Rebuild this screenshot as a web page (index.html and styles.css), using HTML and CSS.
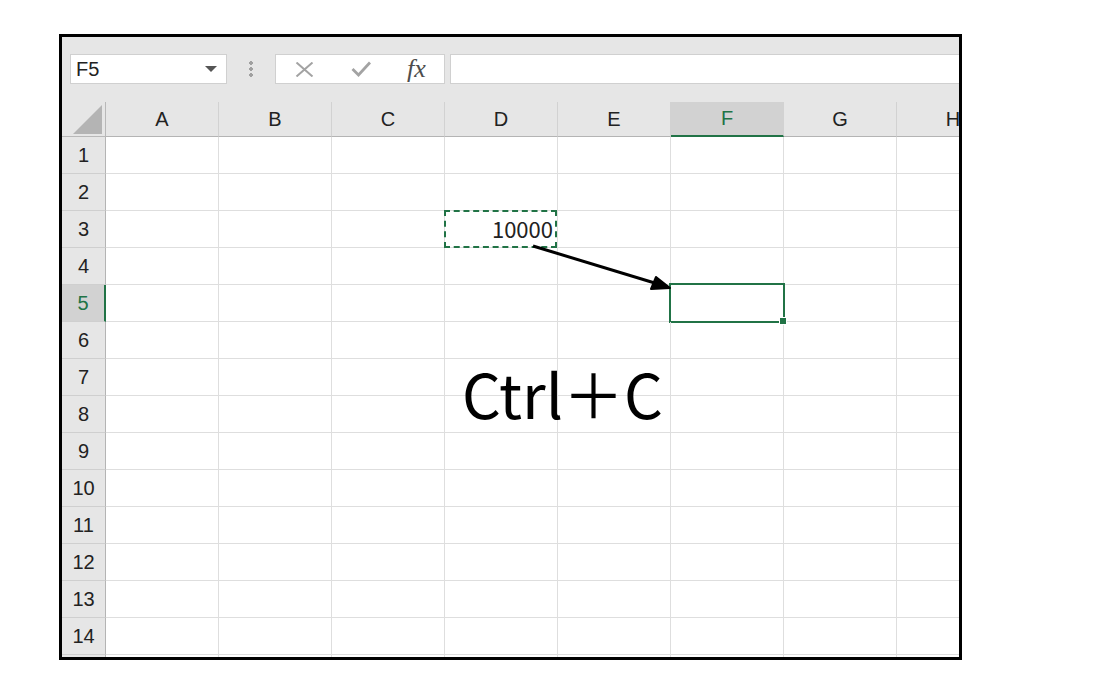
FILE: index.html
```html
<!DOCTYPE html>
<html lang="ja">
<head>
<meta charset="utf-8">
<title>Excel Ctrl+C</title>
<link rel="stylesheet" href="styles.css">
</head>
<body>
<div class="frame">
  <div class="fbar">
    <div class="namebox"><span class="nb-text">F5</span><span class="nb-caret"></span></div>
    <div class="sep"><span class="dots"></span></div>
    <div class="btns">
      <svg class="ic-x" width="19" height="15" viewBox="0 0 19 15"><path d="M1.5 0.5 L17.5 14.5 M17.5 0.5 L1.5 14.5" stroke="#a3a3a3" stroke-width="2" fill="none"/></svg>
      <svg class="ic-ok" width="20" height="16" viewBox="0 0 20 16"><path d="M1.5 8 L7.5 14 L19 1.5" stroke="#a3a3a3" stroke-width="2.8" fill="none"/></svg>
      <span class="fx">fx</span>
    </div>
    <div class="finput"></div>
  </div>
  <div class="sheet">
    <div class="corner"><span class="tri"></span></div>
    <div class="ch">A</div><div class="ch">B</div><div class="ch">C</div><div class="ch">D</div><div class="ch">E</div><div class="ch sel">F</div><div class="ch">G</div><div class="ch">H</div>

    <div class="rh">1</div><div class="c"></div><div class="c"></div><div class="c"></div><div class="c"></div><div class="c"></div><div class="c"></div><div class="c"></div><div class="c"></div>
    <div class="rh">2</div><div class="c"></div><div class="c"></div><div class="c"></div><div class="c"></div><div class="c"></div><div class="c"></div><div class="c"></div><div class="c"></div>
    <div class="rh">3</div><div class="c"></div><div class="c"></div><div class="c"></div><div class="c num copy">10000</div><div class="c"></div><div class="c"></div><div class="c"></div><div class="c"></div>
    <div class="rh">4</div><div class="c"></div><div class="c"></div><div class="c"></div><div class="c"></div><div class="c"></div><div class="c"></div><div class="c"></div><div class="c"></div>
    <div class="rh sel">5</div><div class="c"></div><div class="c"></div><div class="c"></div><div class="c"></div><div class="c"></div><div class="c active"></div><div class="c"></div><div class="c"></div>
    <div class="rh">6</div><div class="c"></div><div class="c"></div><div class="c"></div><div class="c"></div><div class="c"></div><div class="c"></div><div class="c"></div><div class="c"></div>
    <div class="rh">7</div><div class="c"></div><div class="c"></div><div class="c"></div><div class="c"></div><div class="c"></div><div class="c"></div><div class="c"></div><div class="c"></div>
    <div class="rh">8</div><div class="c"></div><div class="c"></div><div class="c"></div><div class="c"></div><div class="c"></div><div class="c"></div><div class="c"></div><div class="c"></div>
    <div class="rh">9</div><div class="c"></div><div class="c"></div><div class="c"></div><div class="c"></div><div class="c"></div><div class="c"></div><div class="c"></div><div class="c"></div>
    <div class="rh">10</div><div class="c"></div><div class="c"></div><div class="c"></div><div class="c"></div><div class="c"></div><div class="c"></div><div class="c"></div><div class="c"></div>
    <div class="rh">11</div><div class="c"></div><div class="c"></div><div class="c"></div><div class="c"></div><div class="c"></div><div class="c"></div><div class="c"></div><div class="c"></div>
    <div class="rh">12</div><div class="c"></div><div class="c"></div><div class="c"></div><div class="c"></div><div class="c"></div><div class="c"></div><div class="c"></div><div class="c"></div>
    <div class="rh">13</div><div class="c"></div><div class="c"></div><div class="c"></div><div class="c"></div><div class="c"></div><div class="c"></div><div class="c"></div><div class="c"></div>
    <div class="rh">14</div><div class="c"></div><div class="c"></div><div class="c"></div><div class="c"></div><div class="c"></div><div class="c"></div><div class="c"></div><div class="c"></div>
    <div class="rh"></div><div class="c"></div><div class="c"></div><div class="c"></div><div class="c"></div><div class="c"></div><div class="c"></div><div class="c"></div><div class="c"></div>

    <svg class="arrow" width="897" height="560" viewBox="0 0 897 560">
      <line x1="471" y1="144" x2="596" y2="182" stroke="#000" stroke-width="3"/>
      <path d="M608 186 L589 187 L594 175 Z" fill="#000" stroke="#000" stroke-width="2" stroke-linejoin="round"/>
    </svg>
    <div class="label">Ctrl＋C</div>
  </div>
</div>
</body>
</html>
```

FILE: styles.css
```css
body {
  margin: 0;
  padding: 34px 0 0 59px;
  background: #fff;
  font-family: "Noto Sans CJK JP", "Liberation Sans", sans-serif;
}

.frame {
  width: 897px;
  height: 620px;
  border: 3px solid #000;
  background: #e6e6e6;
  overflow: hidden;
  display: flex;
  flex-direction: column;
}

.fbar {
  display: flex;
  align-items: center;
  height: 30px;
  margin-top: 17px;
  padding-left: 8px;
  flex: none;
}

.namebox {
  width: 157px;
  height: 30px;
  box-sizing: border-box;
  background: #fff;
  border: 1px solid #d0d0d0;
  display: flex;
  align-items: center;
  justify-content: space-between;
  padding: 0 9px 0 5px;
}

.nb-text {
  font-family: "Liberation Sans", sans-serif;
  font-size: 20px;
  color: #222;
}

.nb-caret {
  width: 0;
  height: 0;
  border-left: 6px solid transparent;
  border-right: 6px solid transparent;
  border-top: 6px solid #555;
}

.sep {
  width: 48px;
  display: flex;
  justify-content: center;
  align-items: center;
  height: 30px;
}

.dots {
  width: 4px;
  height: 18px;
  background: radial-gradient(circle, #a0a0a0 1.6px, transparent 2px) 0 0 / 4px 6px repeat-y;
}

.btns {
  width: 170px;
  height: 30px;
  box-sizing: border-box;
  background: #fff;
  border: 1px solid #d0d0d0;
  display: flex;
  align-items: center;
  padding-left: 19px;
}

.ic-x { margin-right: 37px; }
.ic-ok { margin-right: 36px; }

.fx {
  font-family: "Liberation Serif", serif;
  font-style: italic;
  font-size: 26px;
  line-height: 26px;
  color: #4d4d4d;
  letter-spacing: 0;
}

.finput {
  flex: 1;
  height: 30px;
  margin-left: 5px;
  box-sizing: border-box;
  background: #fff;
  border: 1px solid #d0d0d0;
  border-right: none;
}

.sheet {
  position: relative;
  margin-top: 18px;
  display: grid;
  grid-template-columns: 44px repeat(8, 113px);
  grid-template-rows: 35px repeat(15, 37px);
  background: #fff;
}

.corner {
  background: #e6e6e6;
  border-right: 1px solid #b8b8b8;
  border-bottom: 1px solid #b8b8b8;
  box-sizing: border-box;
  display: flex;
  align-items: flex-end;
  justify-content: flex-end;
  padding: 0 3px 2px 0;
}

.tri {
  width: 0;
  height: 0;
  border-left: 29px solid transparent;
  border-bottom: 29px solid #b4b4b4;
}

.ch {
  background: #e6e6e6;
  border-right: 1px solid #d2d2d2;
  border-bottom: 1px solid #b4b4b4;
  box-sizing: border-box;
  display: flex;
  align-items: center;
  justify-content: center;
  font-family: "Liberation Sans", sans-serif;
  font-size: 20px;
  color: #222;
}

.ch.sel {
  background: #d2d2d2;
  border-bottom: 2px solid #217346;
  color: #217346;
}

.rh {
  background: #e6e6e6;
  border-right: 1px solid #b4b4b4;
  border-bottom: 1px solid #cfcfcf;
  box-sizing: border-box;
  display: flex;
  align-items: center;
  justify-content: center;
  font-family: "Liberation Sans", sans-serif;
  font-size: 20px;
  color: #222;
}

.rh.sel {
  background: #d2d2d2;
  border-right: 2px solid #217346;
  color: #217346;
}

.c {
  border-right: 1px solid #dedede;
  border-bottom: 1px solid #dedede;
  box-sizing: border-box;
  position: relative;
}

.num {
  display: flex;
  align-items: center;
  justify-content: flex-end;
  padding-right: 4px;
  padding-bottom: 2px;
  font-family: "Noto Sans CJK JP", sans-serif;
  font-size: 22px;
  color: #222;
}

.copy::after {
  content: "";
  position: absolute;
  inset: -1px 0 -1px -1px;
  border: 2px dashed #217346;
}

.active::after {
  content: "";
  position: absolute;
  inset: -2px -2px -2px -2px;
  border: 2px solid #217346;
}

.active::before {
  content: "";
  position: absolute;
  right: -4px;
  bottom: -4px;
  width: 6px;
  height: 6px;
  background: #217346;
  border: 1px solid #fff;
  z-index: 2;
}

.arrow {
  position: absolute;
  left: 0;
  top: 0;
  pointer-events: none;
}

.label {
  position: absolute;
  left: 400px;
  top: 251px;
  font-family: "Noto Sans CJK JP", sans-serif;
  font-size: 61px;
  line-height: 80px;
  color: #000;
  white-space: nowrap;
}
```
